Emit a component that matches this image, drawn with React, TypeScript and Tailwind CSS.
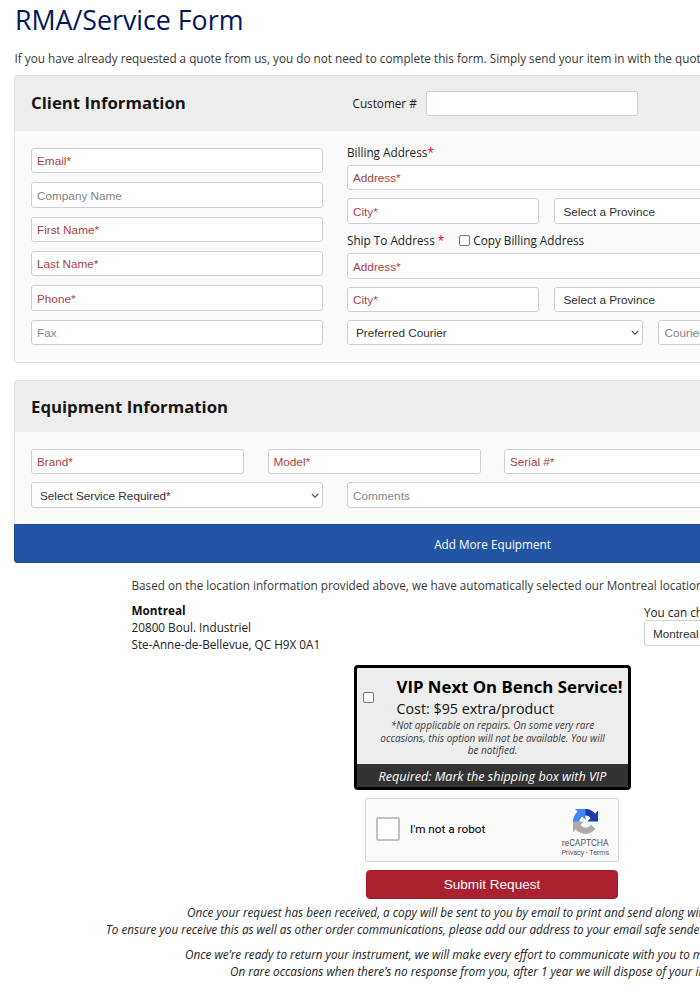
import React from "react";

const sans = "font-['Open_Sans','Noto_Sans',sans-serif]";
const helv = "font-['Liberation_Sans',Arial,sans-serif]";

function Field({ label, className = "", optional = false }: { label?: string; className?: string; optional?: boolean }) {
  return (
    <div
      className={`flex h-[25.4px] shrink-0 items-center overflow-hidden rounded-[3px] border border-[#cfcfcf] bg-white pt-px pl-[5px] whitespace-nowrap text-[11.75px] ${helv} ${optional ? "text-[#858585]" : "text-[#a94145]"} ${className}`}
    >
      {label}
    </div>
  );
}

function Select({ label, className = "" }: { label: string; className?: string }) {
  return (
    <div
      className={`flex h-[25.4px] shrink-0 items-center justify-between rounded-[3px] border border-[#cfcfcf] bg-white pt-px pr-[3px] pl-[8px] whitespace-nowrap text-[11.75px] text-[#303030] ${helv} ${className}`}
    >
      <span>{label}</span>
      <svg className="h-[6px] w-[8px]" viewBox="0 0 8 6" fill="none" stroke="#555" strokeWidth="1.1">
        <path d="M.8 1 4 4.2 7.2 1" />
      </svg>
    </div>
  );
}

function Check({ className = "" }: { className?: string }) {
  return <span className={`inline-block h-[11px] w-[11px] shrink-0 rounded-[2px] border border-[#767676] bg-white ${className}`} />;
}

function Recaptcha() {
  return (
    <svg className="h-[25px] w-[25px]" viewBox="0 0 64 64">
      <path
        fill="#1c3aa9"
        d="M64 31.955l-.016-1.37V4.687l-7.16 7.16C50.965 4.674 42.033.093 32.05.093c-10.4 0-19.622 4.96-25.458 12.64l11.736 11.86a15.55 15.55 0 0 1 4.754-5.334c2.05-1.6 4.952-2.906 8.968-2.906.485 0 .86.057 1.135.163 4.976.393 9.288 3.14 11.828 7.124l-8.307 8.307L64 31.953"
      />
      <path
        fill="#4285f4"
        d="M31.862.094l-1.37.016H4.594l7.16 7.16C4.58 13.147 0 22.08 0 32.046c0 10.4 4.96 19.622 12.64 25.458L24.5 45.768a15.55 15.55 0 0 1-5.334-4.754c-1.6-2.05-2.906-4.952-2.906-8.968 0-.485.057-.86.163-1.135.393-4.976 3.14-9.288 7.124-11.828l8.307 8.307L31.86.095"
      />
      <path
        fill="#ababab"
        d="M.001 32.045l.016 1.37v25.898l7.16-7.16c5.873 7.173 14.805 11.754 24.77 11.754 10.4 0 19.622-4.96 25.458-12.64l-11.736-11.86a15.55 15.55 0 0 1-4.754 5.334c-2.05 1.6-4.952 2.906-8.968 2.906-.485 0-.86-.057-1.135-.163-4.976-.393-9.288-3.14-11.828-7.124l8.307-8.307c-10.522.04-22.4.066-27.295-.005"
      />
    </svg>
  );
}

export default function App() {
  return (
    <div className={`h-[1000px] w-[700px] overflow-hidden bg-white text-[11.74px] text-[#222] ${sans}`}>
      <main className="ml-[14px] flex w-[957px] flex-col whitespace-nowrap">
        <h1 className="h-[50px] pl-px text-[26.75px] leading-[40px] text-[#00175c]">RMA/Service Form</h1>
        <p className="h-[25px] pl-[0.5px] leading-[17px] text-[#383838]">
          If you have already requested a quote from us, you do not need to complete this form. Simply send your item in with the quote.
        </p>

        <section className="h-[288px] overflow-hidden rounded-[3px] border border-[#e1e1e1] bg-[#fafafa]">
          <header className="flex h-[55px] items-center bg-[#ededed] pl-[16px]">
            <h2 className="w-[321.5px] pb-[1px] text-[16.75px] font-bold text-[#161616]">Client Information</h2>
            <span className="w-[73.5px]">Customer #</span>
            <Field className="w-[212.4px]" />
          </header>
          <div className="flex gap-[23.6px] pt-[16.9px] pl-[16px]">
            <div className="flex w-[292.4px] flex-col gap-[9px]">
              <Field label="Email*" />
              <Field label="Company Name" optional />
              <Field label="First Name*" />
              <Field label="Last Name*" />
              <Field label="Phone*" />
              <Field label="Fax" optional />
            </div>
            <div className="flex w-[607px] flex-col">
              <div className="h-[17px] leading-[9px]">
                Billing Address<span className="text-[#e0002d]">*</span>
              </div>
              <Field label="Address*" />
              <div className="mt-[8px] flex gap-[15.5px]">
                <Field label="City*" className="w-[192px]" />
                <Select label="Select a Province" className="w-[192px]" />
              </div>
              <div className="flex h-[29.6px] items-center pt-[4px]">
                <span>
                  Ship To Address <span className="text-[#e0002d]">*</span>
                </span>
                <Check className="mr-[3px] ml-[15px]" />
                <span>Copy Billing Address</span>
              </div>
              <Field label="Address*" />
              <div className="mt-[8px] flex gap-[15.5px]">
                <Field label="City*" className="w-[192px]" />
                <Select label="Select a Province" className="w-[192px]" />
              </div>
              <div className="mt-[8px] flex gap-[15.5px]">
                <Select label="Preferred Courier" className="w-[296px]" />
                <Field label="Courier Account #" optional className="w-[296px]" />
              </div>
            </div>
          </div>
        </section>

        <section className="mt-[17px] overflow-hidden rounded-[3px] border border-[#e1e1e1] bg-[#fafafa]">
          <header className="flex h-[51px] items-center bg-[#ededed] pl-[16px]">
            <h2 className="text-[16.75px] font-bold text-[#161616]">Equipment Information</h2>
          </header>
          <div className="flex h-[92px] flex-col gap-[8px] pt-[17px] pl-[16px]">
            <div className="flex gap-[23.5px]">
              <Field label="Brand*" className="w-[213px]" />
              <Field label="Model*" className="w-[213px]" />
              <Field label="Serial #*" className="w-[449px]" />
            </div>
            <div className="flex gap-[23.6px]">
              <Select label="Select Service Required*" className="w-[292.4px]" />
              <Field label="Comments" optional className="w-[607px]" />
            </div>
          </div>
        </section>
        <button className="-mt-px h-[39px] rounded-b-[3px] border border-[#1c4a95] bg-[#2355a4] pt-[2px] text-white">Add More Equipment</button>

        <div className="flex pl-[117.5px]">
          <div className="w-[512.5px] overflow-visible">
            <p className="mt-[14px] leading-[17px] text-[#383838]">
              Based on the location information provided above, we have automatically selected our Montreal location.
            </p>
            <address className="mt-[8px] leading-[17px] not-italic">
              <b className="text-[#111]">Montreal</b>
              <br />
              20800 Boul. Industriel
              <br />
              Ste-Anne-de-Bellevue, QC H9X 0A1
            </address>
          </div>
          <div className="pt-[41px]">
            <div className="h-[16.4px] leading-[16px]">You can change</div>
            <Select label="Montreal" className="w-[180px]" />
          </div>
        </div>

        <div className="mt-[12px] flex h-[125px] w-[277px] flex-col self-center overflow-hidden rounded-[4px] border-[3px] border-black bg-[#ededed]">
          <div className="flex h-[52px]">
            <Check className="mt-[24px] ml-[6px]" />
            <div className="ml-[22.5px] text-[#111]">
              <div className="mt-[8px] text-[16.8px] leading-[22px] font-bold text-black">VIP Next On Bench Service!</div>
              <div className="text-[14.3px] leading-[21px]">Cost: $95 extra/product</div>
            </div>
          </div>
          <p className="-mt-px text-center text-[10px] leading-[12.7px] text-[#383838] italic">
            *Not applicable on repairs. On some very rare
            <br />
            occasions, this option will not be available. You will
            <br />
            be notified.
          </p>
          <div className="mt-auto h-[23px] bg-[#333] text-center text-[12.6px] leading-[25px] text-white italic">
            Required: Mark the shipping box with VIP
          </div>
        </div>

        <div className="mt-[8px] mr-px flex h-[64px] w-[254px] items-center self-center rounded-[2px] border border-[#d6d6d6] bg-[#fafafa] font-['Roboto',sans-serif] text-black">
          <span className="mb-[2px] ml-[10px] h-[24px] w-[24px] rounded-[2px] border-2 border-[#c1c1c1] bg-white" />
          <span className="ml-[10px] text-[11.75px]">I'm not a robot</span>
          <div className="mr-[9px] ml-auto flex flex-col items-center pt-[6px] text-[#555]">
            <Recaptcha />
            <span className="mt-[4px] text-[8.7px] leading-[10px]">reCAPTCHA</span>
            <span className="text-[7px] leading-[10px]">Privacy - Terms</span>
          </div>
        </div>

        <button className={`mt-[8px] mr-px h-[29px] w-[252px] self-center rounded-[4px] border border-[#a31b2b] bg-[#ab202f] pt-px text-[13.6px] text-white ${helv}`}>
          Submit Request
        </button>

        <div className="flex flex-col items-start leading-[17px] text-[#222] italic">
          <p className="mt-[5px] ml-[173px]">Once your request has been received, a copy will be sent to you by email to print and send along with</p>
          <p className="ml-[92px]">To ensure you receive this as well as other order communications, please add our address to your email safe senders</p>
          <p className="mt-[8px] ml-[171px]">Once we’re ready to return your instrument, we will make every effort to communicate with you to make</p>
          <p className="ml-[216px]">On rare occasions when there’s no response from you, after 1 year we will dispose of your instrument.</p>
        </div>
      </main>
    </div>
  );
}
